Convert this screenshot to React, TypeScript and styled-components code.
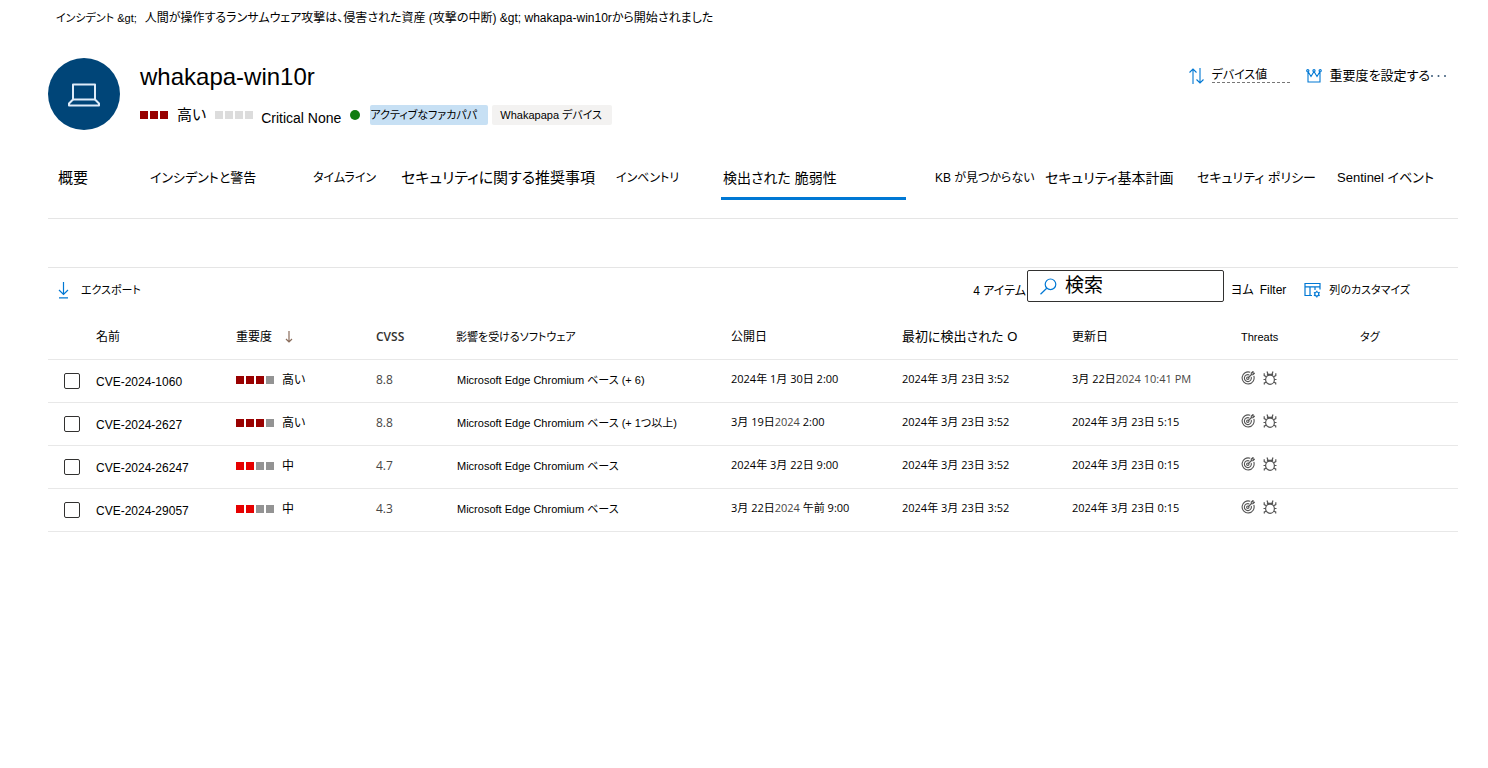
import React from 'react';
import styled, { createGlobalStyle } from 'styled-components';

const UI = `"Liberation Sans", "Noto Sans CJK JP", sans-serif`;
const SEGOE = `"Open Sans", "Noto Sans CJK JP", sans-serif`;

const GlobalStyle = createGlobalStyle`
  * { box-sizing: border-box; }
  body {
    margin: 0;
    background: #fff;
    color: #000;
    font-family: ${UI};
    font-size: 12px;
    line-height: 16px;
    font-feature-settings: "palt";
  }
  button, input {
    font: inherit;
    color: inherit;
    font-feature-settings: inherit;
  }
  a { color: inherit; text-decoration: none; }
`;

const Page = styled.div`
  min-width: 1280px;
  padding: 10px 30px 24px 48px;
`;

const Breadcrumb = styled.nav`
  display: flex;
  gap: 8px;
  padding-left: 8px;
  white-space: nowrap;
`;

const Crumb = styled.a<{ $small?: boolean }>`
  font-size: ${(p) => (p.$small ? 11 : 12)}px;
`;

const Header = styled.header`
  display: flex;
  gap: 20px;
  margin-top: 32px;
`;

const Avatar = styled.div`
  display: flex;
  align-items: center;
  justify-content: center;
  width: 72px;
  height: 72px;
  padding-top: 2px;
  border-radius: 50%;
  background: #004578;
`;

const Identity = styled.div`
  flex: 1;
`;

const Title = styled.h1`
  margin: 3px 0 0;
  font-size: 24px;
  font-weight: 400;
  line-height: 32px;
`;

const Facts = styled.div`
  display: flex;
  align-items: center;
  height: 20px;
  margin-top: 12px;
  white-space: nowrap;
`;

const Level = styled.span`
  margin: 0 9px;
  font-size: 15px;
`;

const Critical = styled.span`
  margin: 5px 9px 0 8px;
  font-size: 14px;
`;

const Dot = styled.span`
  width: 10px;
  height: 10px;
  margin-right: 10px;
  border-radius: 50%;
  background: #107c10;
`;

const Tag = styled.span<{ $active?: boolean }>`
  width: ${(p) => (p.$active ? 118 : 120)}px;
  margin-right: 4px;
  padding-left: ${(p) => (p.$active ? 0 : 8)}px;
  border-radius: 2px;
  font-size: 11px;
  line-height: 20px;
  background: ${(p) => (p.$active ? '#c7e0f4' : '#f3f2f1')};
`;

const Bars = styled.span`
  display: inline-flex;
  gap: 2px;
`;

const Bar = styled.span<{ $color: string }>`
  width: 8px;
  height: 8px;
  background: ${(p) => p.$color};
`;

const Actions = styled.div`
  display: flex;
  align-items: center;
  height: 20px;
  margin-top: 8px;
  padding-right: 11px;
`;

const IconButton = styled.button<{ $size?: number }>`
  display: flex;
  align-items: center;
  gap: 8px;
  padding: 0;
  border: 0;
  background: none;
  font-size: ${(p) => p.$size ?? 13}px;
  white-space: nowrap;
`;

const DeviceValue = styled.span`
  width: 78px;
  margin-right: 16px;
  padding-bottom: 1px;
  border-bottom: 1px dashed #777;
  line-height: 12px;
  text-align: left;
`;

const Tabs = styled.nav`
  display: grid;
  grid-template-columns: 92fr 163fr 88fr 215fr 105fr 214fr 110fr 152fr 140fr 121fr;
  margin-top: 32px;
  padding: 0 0 18px 10px;
  border-bottom: 1px solid #e5e5e5;
`;

const Tab = styled.a<{ $size?: number; $active?: boolean }>`
  height: 38px;
  width: ${(p) => (p.$active ? '185px' : 'auto')};
  padding-left: ${(p) => (p.$active ? 2 : 0)}px;
  border-bottom: 3px solid ${(p) => (p.$active ? '#0078d4' : 'transparent')};
  font-size: ${(p) => p.$size ?? 14}px;
  line-height: 32px;
  white-space: nowrap;
`;

const Toolbar = styled.div`
  display: flex;
  align-items: center;
  justify-content: space-between;
  height: 49px;
  margin-top: 48px;
  padding: 2px 48px 14px 8px;
  border-top: 1px solid #e5e5e5;
`;

const Tools = styled.div`
  display: flex;
  align-items: center;
`;

const Count = styled.span`
  padding: 10px 1px 0 0;
`;

const SearchBox = styled.label`
  display: flex;
  align-items: center;
  gap: 8px;
  width: 197px;
  height: 32px;
  padding: 0 12px;
  border: 1px solid #323130;
  border-radius: 2px;
`;

const SearchInput = styled.input`
  flex: 1;
  min-width: 0;
  padding: 0;
  border: 0;
  outline: 0;
  background: none;
  font-size: 19px;
  &::placeholder { color: #000; opacity: 1; }
`;

const FilterButton = styled(IconButton)`
  gap: 6px;
  margin: 8px 18px 0 7px;
`;

const ColumnsButton = styled(IconButton)`
  margin-top: 8px;
`;

const ExportButton = styled(IconButton)`
  gap: 10px;
  margin-top: 8px;
`;

const Table = styled.table`
  width: 100%;
  table-layout: fixed;
  border-collapse: collapse;
`;

const Row = styled.tr`
  height: 43px;
  border-bottom: 1px solid #e8e8e8;
`;

const Th = styled.th<{ $size?: number }>`
  padding: 0;
  font-size: ${(p) => p.$size ?? 12}px;
  font-weight: 400;
  text-align: left;
  white-space: nowrap;
`;

const ScoreTh = styled(Th)`
  color: #323130;
  font-family: ${SEGOE};
  font-weight: 600;
`;

const Sorted = styled.span`
  display: flex;
  align-items: center;
  gap: 12px;
`;

const Td = styled.td`
  padding: 0 0 2px;
  white-space: nowrap;
`;

const CheckTd = styled(Td)`
  padding: 0 0 0 16px;
`;

const NameTd = styled(Td)`
  padding: 2px 0 0;
`;

const SoftwareTd = styled(Td)`
  padding-left: 1px;
  font-size: 11px;
`;

const ScoreTd = styled(Td)`
  color: #484644;
  font-family: ${SEGOE};
`;

const DateTd = styled(Td)`
  padding-bottom: 4px;
  font-family: ${SEGOE};
  font-size: 11px;
`;

const Soft = styled.span`
  color: #484644;
`;

const Severity = styled.span`
  display: flex;
  align-items: center;
  gap: 8px;
`;

const Check = styled.input`
  display: block;
  appearance: none;
  width: 16px;
  height: 16px;
  margin: 0;
  border: 1px solid #323130;
  border-radius: 2px;
`;

const Threats = styled.span`
  display: flex;
  align-items: center;
  gap: 8px;
  padding-bottom: 3px;
`;

const DARK = '#990000';
const RED = '#e60000';
const GREY = '#939393';

function Meter({ colors }: { colors: string[] }) {
  return (
    <Bars>
      {colors.map((c, i) => (
        <Bar key={i} $color={c} />
      ))}
    </Bars>
  );
}

const LaptopIcon = () => (
  <svg width="32" height="24" viewBox="0 0 32 24" fill="none" stroke="#deecf9" strokeWidth="2" strokeLinejoin="round">
    <path d="M5 1.500h22v15H5z" />
    <path d="M5 16.500L1 20.500v2h30v-2l-4-4" />
  </svg>
);

const SortIcon = () => (
  <svg width="15" height="16" viewBox="0 0 15 16" fill="none" stroke="#0078d4" strokeWidth="1.100">
    <path d="M4 16V1M.5 4.500L4 1l3.500 3.500M11 0v15M7.500 11.500L11 15l3.500-3.500" />
  </svg>
);

const CrownIcon = () => (
  <svg width="16" height="14" viewBox="0 0 16 14" fill="none" stroke="#0078d4" strokeWidth="1.100">
    <path d="M2 2.500V13h12V2.500L11 7.500 8 2.500 5 7.500 2 2.500zM2 10" />
    <g fill="#fff">
      <circle cx="1.800" cy="1.700" r="1.100" />
      <circle cx="8" cy="1.700" r="1.100" />
      <circle cx="14.200" cy="1.700" r="1.100" />
    </g>
  </svg>
);

const MoreIcon = () => (
  <svg width="17" height="4" viewBox="0 0 17 4" fill="#3b5a78">
    <circle cx="2" cy="2" r="1" />
    <circle cx="8.500" cy="2" r="1" />
    <circle cx="15" cy="2" r="1" />
  </svg>
);

const DownloadIcon = () => (
  <svg width="15" height="17" viewBox="0 0 15 17" fill="none" stroke="#0078d4" strokeWidth="1.200">
    <path d="M7.500 0v12.500M3 8l4.500 4.500L12 8M3 15.800h9" />
  </svg>
);

const SearchIcon = () => (
  <svg width="17" height="17" viewBox="0 0 17 17" fill="none" stroke="#0078d4" strokeWidth="1.200">
    <circle cx="10.500" cy="6.300" r="5.300" />
    <path d="M6.700 10.200L.5 16.300" />
  </svg>
);

const ColumnsIcon = () => (
  <svg width="17" height="16" viewBox="0 0 17 16" fill="none" stroke="#0078d4" strokeWidth="1.200">
    <path d="M8 13.500H1V1.500h15v6M1 4.800h15M6 4.800v8.700M11 4.800V8" />
    <circle cx="12.800" cy="12" r="2" />
    <path d="M12.800 8.700V10M12.800 14v1.400M9.900 10.400l1.200.7M14.500 13l1.200.7M9.900 13.700l1.200-.7M14.500 11l1.200-.7" />
  </svg>
);

const DownArrow = () => (
  <svg width="10" height="12" viewBox="0 0 10 12" fill="none" stroke="#8a6d5c" strokeWidth="1.200">
    <path d="M5 0v11M2 8l3 3 3-3" />
  </svg>
);

const TargetIcon = () => (
  <svg width="14" height="14" viewBox="0 0 14 14" fill="none" stroke="#555" strokeWidth="1.100">
    <path d="M9.200 1.300A6 6 0 1 0 12.800 5" />
    <path d="M8.300 3.900A3.500 3.500 0 1 0 10.200 6" />
    <circle cx="6.800" cy="7.200" r="1.200" />
    <path d="M7 7l4-4M10.300 3.800V2L12 .5v1.700h1.600L12 3.800z" />
  </svg>
);

const BugIcon = () => (
  <svg width="14" height="14" viewBox="0 0 14 14" fill="none" stroke="#555" strokeWidth="1.200">
    <ellipse cx="7" cy="8.700" rx="4.400" ry="4.600" />
    <path d="M4.500 4.800V3.300h5v1.500M5 3.300L4 .5M9 3.300l1-2.800M3.400 5.800L1.200 4.600V2.200M10.600 5.800l2.200-1.200V2.200M2.600 8.500H.5M11.400 8.500h2.100M3.300 11.200l-2 .8v1.500M10.700 11.200l2 .8v1.500" />
  </svg>
);

const tabs = [
  { label: '概要', size: 15 },
  { label: 'インシデントと警告', size: 13 },
  { label: 'タイムライン', size: 12 },
  { label: 'セキュリティに関する推奨事項', size: 15 },
  { label: 'インベントリ', size: 12 },
  { label: '検出された 脆弱性', size: 14, active: true },
  { label: 'KB が見つからない', size: 12 },
  { label: 'セキュリティ基本計画', size: 14 },
  { label: 'セキュリティ ポリシー', size: 13 },
  { label: 'Sentinel イベント', size: 13 },
];

type Vulnerability = {
  name: string;
  high: boolean;
  score: string;
  software: string;
  published: React.ReactNode;
  updated: React.ReactNode;
};

const rows: Vulnerability[] = [
  {
    name: 'CVE-2024-1060',
    high: true,
    score: '8.8',
    software: 'Microsoft Edge Chromium ベース (+ 6)',
    published: '2024年 1月 30日 2:00',
    updated: <>3月 22日<Soft>2024 10:41 PM</Soft></>,
  },
  {
    name: 'CVE-2024-2627',
    high: true,
    score: '8.8',
    software: 'Microsoft Edge Chromium ベース (+ 1つ以上)',
    published: <>3月 19日<Soft>2024</Soft> 2:00</>,
    updated: '2024年 3月 23日 5:15',
  },
  {
    name: 'CVE-2024-26247',
    high: false,
    score: '4.7',
    software: 'Microsoft Edge Chromium ベース',
    published: '2024年 3月 22日 9:00',
    updated: '2024年 3月 23日 0:15',
  },
  {
    name: 'CVE-2024-29057',
    high: false,
    score: '4.3',
    software: 'Microsoft Edge Chromium ベース',
    published: <>3月 22日<Soft>2024</Soft> 午前 9:00</>,
    updated: '2024年 3月 23日 0:15',
  },
];

const columnWidths = [48, 140, 140, 80, undefined, 171, 170, 169, 119, 98];

export default function App() {
  return (
    <>
      <GlobalStyle />
      <Page>
        <Breadcrumb>
          <Crumb href="#incidents" $small>インシデント {'&gt;'}</Crumb>
          <Crumb href="#incident">
            人間が操作するランサムウェア攻撃は、侵害された資産 (攻撃の中断) {'&gt;'} whakapa-win10rから開始されました
          </Crumb>
        </Breadcrumb>

        <Header>
          <Avatar>
            <LaptopIcon />
          </Avatar>
          <Identity>
            <Title>whakapa-win10r</Title>
            <Facts>
              <Meter colors={[DARK, DARK, DARK]} />
              <Level>高い</Level>
              <Meter colors={['#dcdcdc', '#dcdcdc', '#dcdcdc', '#dcdcdc']} />
              <Critical>Critical None</Critical>
              <Dot />
              <Tag $active>アクティブなファカパパ</Tag>
              <Tag>Whakapapa デバイス</Tag>
            </Facts>
          </Identity>
          <Actions>
            <IconButton $size={12}>
              <SortIcon />
              <DeviceValue>デバイス値</DeviceValue>
            </IconButton>
            <IconButton>
              <CrownIcon />
              重要度を設定する
            </IconButton>
            <IconButton aria-label="その他">
              <MoreIcon />
            </IconButton>
          </Actions>
        </Header>

        <Tabs>
          {tabs.map((t) => (
            <Tab key={t.label} href="#tab" $size={t.size} $active={t.active} aria-current={t.active ? 'page' : undefined}>
              {t.label}
            </Tab>
          ))}
        </Tabs>

        <Toolbar>
          <ExportButton $size={11}>
            <DownloadIcon />
            エクスポート
          </ExportButton>
          <Tools>
            <Count>4 アイテム</Count>
            <SearchBox>
              <SearchIcon />
              <SearchInput type="text" placeholder="検索" aria-label="検索" />
            </SearchBox>
            <FilterButton $size={12}>
              <span>ヨム</span>
              <span>Filter</span>
            </FilterButton>
            <ColumnsButton $size={11}>
              <ColumnsIcon />
              列のカスタマイズ
            </ColumnsButton>
          </Tools>
        </Toolbar>

        <Table>
          <colgroup>
            {columnWidths.map((w, i) => (
              <col key={i} width={w} />
            ))}
          </colgroup>
          <thead>
            <Row>
              <Th aria-label="選択" />
              <Th>名前</Th>
              <Th>
                <Sorted>
                  重要度
                  <DownArrow />
                </Sorted>
              </Th>
              <ScoreTh>CVSS</ScoreTh>
              <Th $size={11}>影響を受けるソフトウェア</Th>
              <Th>公開日</Th>
              <Th $size={13}>最初に検出された O</Th>
              <Th>更新日</Th>
              <Th $size={11}>Threats</Th>
              <Th $size={11}>タグ</Th>
            </Row>
          </thead>
          <tbody>
            {rows.map((r) => (
              <Row key={r.name}>
                <CheckTd>
                  <Check type="checkbox" aria-label={r.name} />
                </CheckTd>
                <NameTd>{r.name}</NameTd>
                <Td>
                  <Severity>
                    <Meter colors={r.high ? [DARK, DARK, DARK, GREY] : [RED, RED, GREY, GREY]} />
                    {r.high ? '高い' : '中'}
                  </Severity>
                </Td>
                <ScoreTd>{r.score}</ScoreTd>
                <SoftwareTd>{r.software}</SoftwareTd>
                <DateTd>{r.published}</DateTd>
                <DateTd>2024年 3月 23日 3:52</DateTd>
                <DateTd>{r.updated}</DateTd>
                <Td>
                  <Threats>
                    <TargetIcon />
                    <BugIcon />
                  </Threats>
                </Td>
                <Td />
              </Row>
            ))}
          </tbody>
        </Table>
      </Page>
    </>
  );
}
